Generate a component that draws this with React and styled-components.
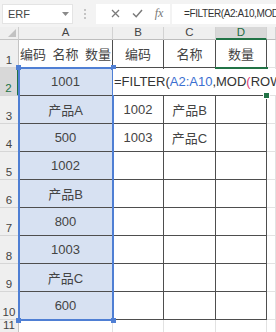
import React from 'react';
import styled, { createGlobalStyle } from 'styled-components';

const Global = createGlobalStyle`
  html, body { margin: 0; padding: 0; background: #fff; }
  body {
    width: 276px; height: 332px; overflow: hidden;
    font-family: "Liberation Sans", "Noto Sans CJK SC", sans-serif;
  }
`;

const Frame = styled.div`
  width: 276px; height: 332px; display: flex; flex-direction: column; overflow: hidden;
`;

const Toolbar = styled.div`
  height: 27px; flex: none; background: #f3f3f3; display: flex; align-items: center;
  padding-left: 2px; box-sizing: border-box;
`;

const NameBox = styled.div`
  width: 71px; height: 20px; background: #fff; border: 1px solid #e4e4e4; box-sizing: border-box;
  display: flex; align-items: center; justify-content: space-between; padding: 0 3px 0 5px;
  font-size: 11px; color: #444;
`;

const Grip = styled.div`
  width: 23px; display: flex; justify-content: center; align-items: center;
`;

const Buttons = styled.div`
  width: 74px; height: 20px; background: #fff; display: flex; align-items: center;
  box-sizing: border-box; padding-left: 8px;
`;

const IconSlot = styled.div`
  width: 24px; height: 20px; display: flex; align-items: center; justify-content: center;
`;

const Fx = styled.span`
  font-family: "Liberation Serif", serif; font-style: italic; font-size: 12px; color: #777;
`;

const FormulaBox = styled.div`
  flex: 1; margin-left: 2px; height: 20px; background: #fff; padding-left: 12px;
  font-size: 10px; letter-spacing: -0.4px; white-space: nowrap; overflow: hidden; line-height: 20px; color: #333;
`;

const Sheet = styled.div`
  flex: 1; display: grid; position: relative;
  grid-template-columns: 19px 94px 51px 52px 51px 1fr;
  grid-template-rows: 13px repeat(10, 28px) 1fr;
  font-size: 13px; color: #444;
`;

const Corner = styled.div`
  background: #efefef; border-right: 1px solid #cfcfcf; border-bottom: 1px solid #c4c4c4;
  box-sizing: border-box; display: flex; align-items: flex-end; justify-content: flex-end; padding: 0 2px 2px 0;
`;

const ColHead = styled.div`
  background: ${p => (p.$active ? '#d8d8d8' : '#efefef')};
  border-right: 1px solid #d2d2d2;
  border-bottom: ${p => (p.$active ? '2px solid #217346' : '1px solid #bdbdbd')};
  box-sizing: border-box; display: flex; align-items: center; justify-content: center;
  font-size: 11.5px; line-height: 1; color: ${p => (p.$active ? '#1f6b42' : '#444')};
`;

const RowHead = styled.div`
  background: ${p => (p.$active ? '#d8d8d8' : '#efefef')};
  border-right: ${p => (p.$active ? '2px solid #217346' : '1px solid #c4c4c4')};
  border-bottom: 1px solid #d6d6d6;
  box-sizing: border-box; display: flex; align-items: flex-end; justify-content: center;
  padding-bottom: 1px; font-size: 11.5px; line-height: 1; color: ${p => (p.$active ? '#217346' : '#444')};
`;

const Cell = styled.div`
  background: ${p => (p.$fill ? '#d7e1f2' : '#fff')};
  border-right: 1px solid ${p => (p.$table ? '#4e4e4e' : '#e2e2e2')};
  border-bottom: 1px solid ${p => (p.$table ? '#4e4e4e' : '#e2e2e2')};
  box-sizing: border-box; display: flex; align-items: center; justify-content: center;
  white-space: nowrap; overflow: hidden; word-spacing: 3px;
`;

const Selection = styled.div`
  position: absolute; left: 18px; top: 40px; width: 96px; height: 254px;
  border: 2px solid #4f7fd4; box-sizing: border-box; pointer-events: none;
`;

const Handle = styled.div`
  position: absolute; width: 5px; height: 5px; background: #4f7fd4;
  ${p => (p.$top ? 'top: -4px;' : 'bottom: -4px;')}
  ${p => (p.$left ? 'left: -4px;' : 'right: -4px;')}
`;

const ActiveBox = styled.div`
  position: absolute; left: 215px; top: 40px; width: 53px; height: 30px;
  border-top: 2px solid #217346; box-sizing: border-box; pointer-events: none;
`;

const ActiveHandle = styled.div`
  position: absolute; right: -2px; bottom: -2px; width: 5px; height: 5px; background: #217346;
  border: 1px solid #fff;
`;

const Editor = styled.div`
  position: absolute; left: 113px; right: 0; top: 42px; height: 26px; background: #fff;
  font-size: 13px; line-height: 26px; padding-left: 1px; white-space: nowrap; overflow: hidden; color: #333;
`;

const Ref = styled.span` color: ${p => p.$c}; `;

const cols = ['A', 'B', 'C', 'D'];
const aValues = ['编码 名称 数量', '1001', '产品A', '500', '1002', '产品B', '800', '1003', '产品C', '600'];
const bValues = { 1: '编码', 3: '1002', 4: '1003' };
const cValues = { 1: '名称', 3: '产品B', 4: '产品C' };
const dValues = { 1: '数量' };

function Formula({ refColor, parenColor }) {
  return (
    <>
      =FILTER(<Ref $c={refColor}>A2:A10</Ref>,MOD<Ref $c={parenColor}>(</Ref>ROW(
    </>
  );
}

export default function App() {
  const rows = [];
  for (let r = 1; r <= 10; r++) {
    rows.push(
      <React.Fragment key={r}>
        <RowHead $active={r === 2}>{r}</RowHead>
        <Cell $table $fill={r >= 2}>{aValues[r - 1]}</Cell>
        <Cell $table>{bValues[r] || ''}</Cell>
        <Cell $table>{cValues[r] || ''}</Cell>
        <Cell $table>{dValues[r] || ''}</Cell>
        <Cell />
      </React.Fragment>
    );
  }
  return (
    <Frame>
      <Global />
      <Toolbar>
        <NameBox>
          <span>ERF</span>
          <svg width="7" height="4" viewBox="0 0 7 4"><path d="M0 0h7L3.5 4z" fill="#8a8a8a" /></svg>
        </NameBox>
        <Grip>
          <svg width="2" height="10" viewBox="0 0 2 10">
            <rect x="0" y="0" width="2" height="2" fill="#c4c4c4" />
            <rect x="0" y="4" width="2" height="2" fill="#c4c4c4" />
            <rect x="0" y="8" width="2" height="2" fill="#c4c4c4" />
          </svg>
        </Grip>
        <Buttons>
          <IconSlot>
            <svg width="9" height="9" viewBox="0 0 9 9"><path d="M1 1l7 7M8 1L1 8" stroke="#7a7a7a" strokeWidth="1.3" /></svg>
          </IconSlot>
          <IconSlot>
            <svg width="11" height="9" viewBox="0 0 11 9"><path d="M1 4.5l3.2 3.2L10 1" stroke="#7a7a7a" strokeWidth="1.5" fill="none" /></svg>
          </IconSlot>
          <IconSlot><Fx>fx</Fx></IconSlot>
        </Buttons>
        <FormulaBox><Formula refColor="inherit" parenColor="inherit" /></FormulaBox>
      </Toolbar>
      <Sheet>
        <Corner>
          <svg width="8" height="8" viewBox="0 0 8 8"><path d="M8 0V8H0z" fill="#c2c2c2" /></svg>
        </Corner>
        {cols.map(c => <ColHead key={c} $active={c === 'D'}>{c}</ColHead>)}
        <ColHead />
        {rows}
        <RowHead>11</RowHead>
        <Cell /><Cell /><Cell /><Cell /><Cell />
        <Selection>
          <Handle $top $left /><Handle $top /><Handle $left /><Handle />
        </Selection>
        <Editor><Formula refColor="#3b6fd0" parenColor="#e0407a" /></Editor>
        <ActiveBox><ActiveHandle /></ActiveBox>
      </Sheet>
    </Frame>
  );
}
